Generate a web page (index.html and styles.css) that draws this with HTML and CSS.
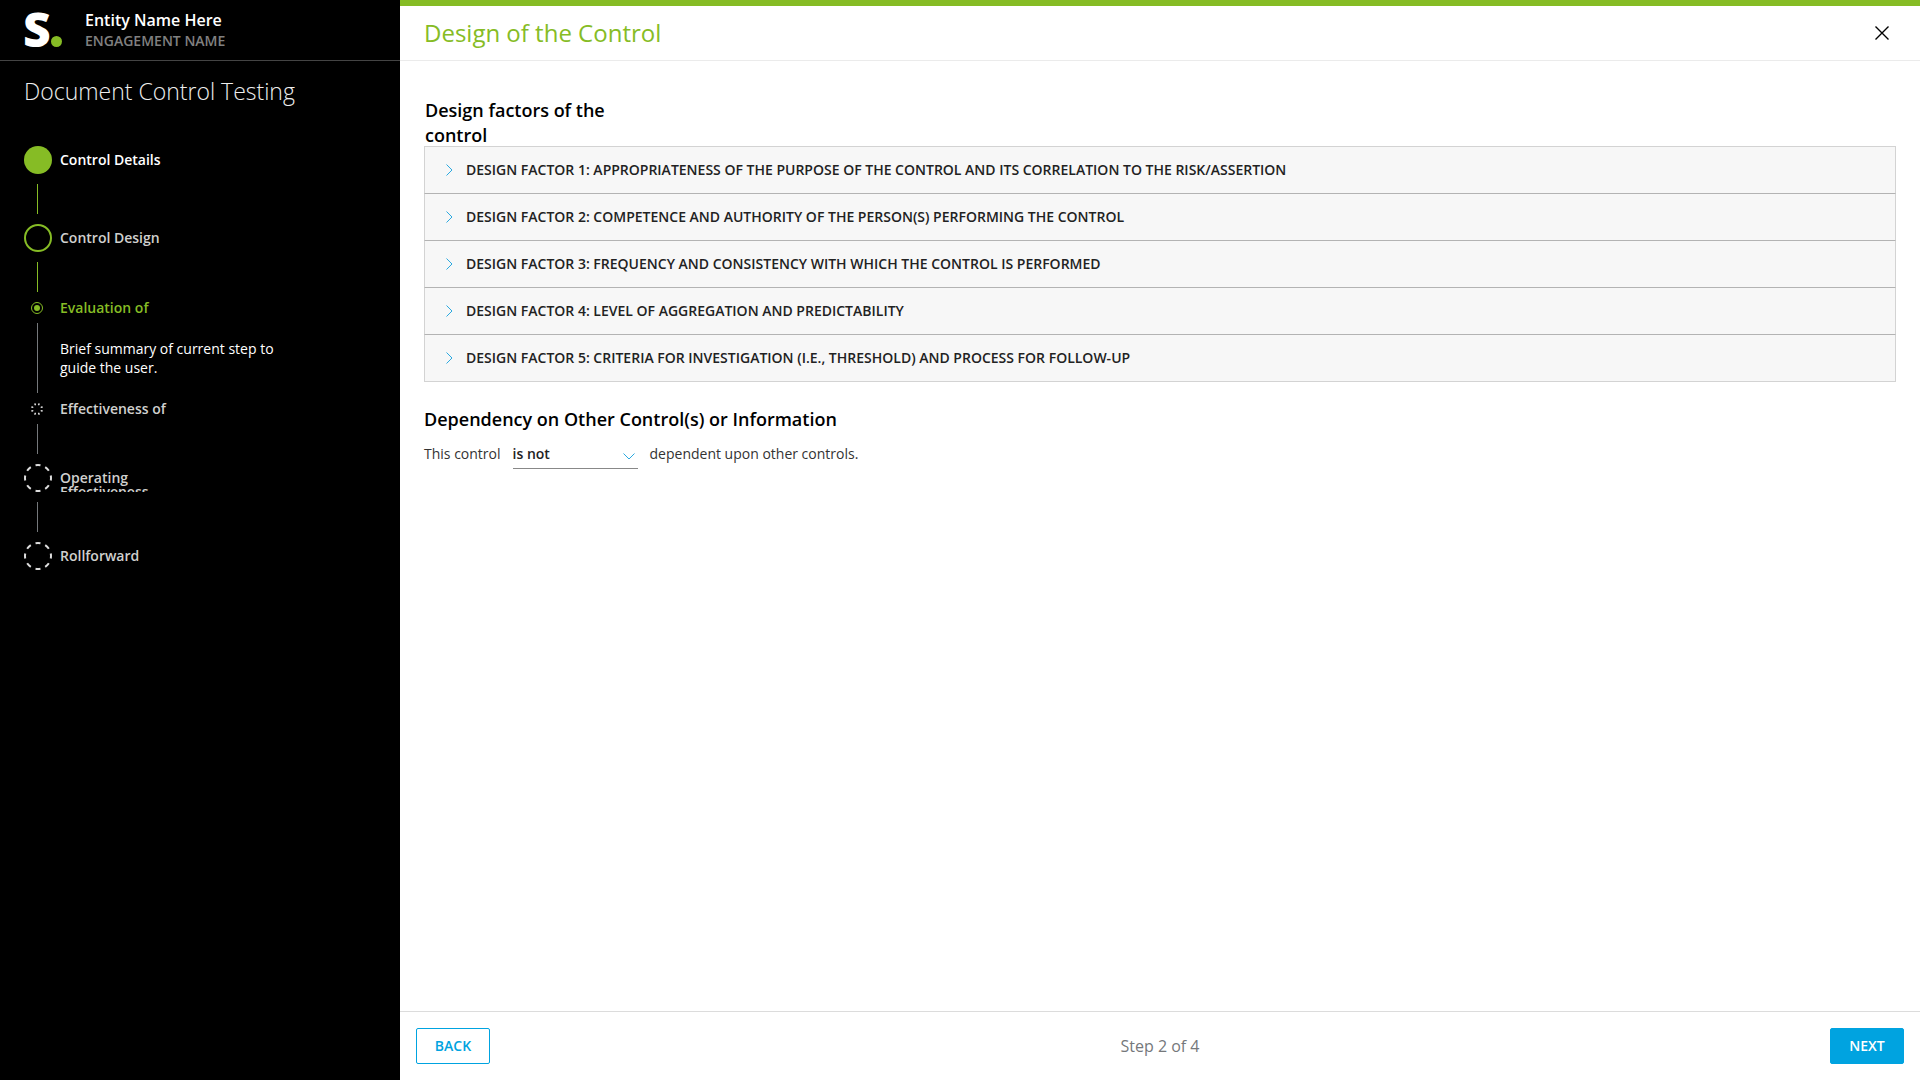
FILE: index.html
```html
<!DOCTYPE html>
<html lang="en">
<head>
  <meta charset="UTF-8" />
  <title>Document Control Testing</title>
  <meta name="viewport" content="width=device-width, initial-scale=1.0"/>
  <link rel="stylesheet" href="styles.css">
</head>
<body>

  <aside class="sidebar">
    <header class="brand">
      <div class="logo">S<span class="logo-dot"></span></div>
      <div class="entity">
        <div class="entity-name">Entity Name Here</div>
        <div class="engagement-name">ENGAGEMENT NAME</div>
      </div>
    </header>

    <h1 class="sidebar-title">Document Control Testing</h1>

    <ol class="steps">
      <li>
        <div class="step done">
          <svg class="marker" viewBox="0 0 28 28"><circle cx="14" cy="14" r="14" fill="#86bc25"/></svg>
          <span class="step-label">Control Details</span>
        </div>
        <div class="connector green"></div>
      </li>
      <li>
        <div class="step">
          <svg class="marker" viewBox="0 0 28 28"><circle cx="14" cy="14" r="13" fill="none" stroke="#86bc25" stroke-width="2"/></svg>
          <span class="step-label">Control Design</span>
        </div>
        <div class="connector green"></div>
      </li>
      <li>
        <div class="step substep current">
          <svg class="marker" viewBox="0 0 12 12"><circle cx="6" cy="6" r="5.5" fill="none" stroke="#86bc25"/><circle cx="6" cy="6" r="3" fill="#86bc25"/></svg>
          <span class="step-label">Evaluation of</span>
        </div>
        <div class="step-body">
          <div class="connector tall"></div>
          <p class="summary">Brief summary of current step to guide the user.</p>
        </div>
      </li>
      <li>
        <div class="step substep">
          <svg class="marker" viewBox="0 0 12 12"><circle cx="6" cy="6" r="5" fill="none" stroke="#ddd" stroke-width="2" pathLength="80" stroke-dasharray="4 6" stroke-dashoffset="-3"/></svg>
          <span class="step-label">Effectiveness of</span>
        </div>
        <div class="connector"></div>
      </li>
      <li>
        <div class="step">
          <svg class="marker" viewBox="0 0 28 28"><circle cx="14" cy="14" r="13" fill="none" stroke="#ddd" stroke-width="2" pathLength="80" stroke-dasharray="5 5" stroke-dashoffset="2.5"/></svg>
          <span class="step-label">Operating Effectiveness</span>
        </div>
        <div class="connector"></div>
      </li>
      <li>
        <div class="step">
          <svg class="marker" viewBox="0 0 28 28"><circle cx="14" cy="14" r="13" fill="none" stroke="#ddd" stroke-width="2" pathLength="80" stroke-dasharray="5 5" stroke-dashoffset="2.5"/></svg>
          <span class="step-label">Rollforward</span>
        </div>
      </li>
    </ol>
  </aside>

  <main class="main">
    <header class="page-header">
      <h2 class="page-title">Design of the Control</h2>
      <button class="close" aria-label="Close">
        <svg width="14" height="14" viewBox="0 0 14 14"><path d="M0.5 0.5L13.5 13.5M13.5 0.5L0.5 13.5" fill="none" stroke="#000" stroke-width="1.4"/></svg>
      </button>
    </header>

    <div class="content">
      <h3 class="section-title factors-title">Design factors of the control</h3>
      <div class="accordion">
        <button class="factor"><svg class="chevron" viewBox="0 0 7 12"><path d="M0.5 0.5L6 6L0.5 11.5"/></svg>DESIGN FACTOR 1: APPROPRIATENESS OF THE PURPOSE OF THE CONTROL AND ITS CORRELATION TO THE RISK/ASSERTION</button>
        <button class="factor"><svg class="chevron" viewBox="0 0 7 12"><path d="M0.5 0.5L6 6L0.5 11.5"/></svg>DESIGN FACTOR 2: COMPETENCE AND AUTHORITY OF THE PERSON(S) PERFORMING THE CONTROL</button>
        <button class="factor"><svg class="chevron" viewBox="0 0 7 12"><path d="M0.5 0.5L6 6L0.5 11.5"/></svg>DESIGN FACTOR 3: FREQUENCY AND CONSISTENCY WITH WHICH THE CONTROL IS PERFORMED</button>
        <button class="factor"><svg class="chevron" viewBox="0 0 7 12"><path d="M0.5 0.5L6 6L0.5 11.5"/></svg>DESIGN FACTOR 4: LEVEL OF AGGREGATION AND PREDICTABILITY</button>
        <button class="factor"><svg class="chevron" viewBox="0 0 7 12"><path d="M0.5 0.5L6 6L0.5 11.5"/></svg>DESIGN FACTOR 5: CRITERIA FOR INVESTIGATION (I.E., THRESHOLD) AND PROCESS FOR FOLLOW-UP</button>
      </div>

      <h3 class="section-title">Dependency on Other Control(s) or Information</h3>
      <div class="dependency">
        <label for="dependency">This control</label>
        <div class="select">
          <select id="dependency">
            <option>is</option>
            <option selected>is not</option>
          </select>
          <svg class="select-arrow" viewBox="0 0 12 7"><path d="M0.5 0.5L6 6L11.5 0.5"/></svg>
        </div>
        <span>dependent upon other controls.</span>
      </div>
    </div>

    <footer class="page-footer">
      <button class="btn">BACK</button>
      <span class="step-count">Step 2 of 4</span>
      <button class="btn primary">NEXT</button>
    </footer>
  </main>

</body>
</html>
```
FILE: styles.css
```css
* {
  box-sizing: border-box;
}

body {
  margin: 0;
  display: flex;
  min-height: 100vh;
  font-family: "Open Sans", sans-serif;
  font-size: 14px;
  color: #333;
  background: #fff;
}

h1, h2, h3, p, ol {
  margin: 0;
  padding: 0;
}

button, select {
  font-family: inherit;
  font-size: 14px;
  cursor: pointer;
}

/* sidebar */
.sidebar {
  flex: 0 0 400px;
  background: #000;
  color: #d0d0ce;
}

.brand {
  display: flex;
  align-items: center;
  height: 61px;
  padding: 0 24px 0 23px;
  border-bottom: 1px solid #444;
}

.logo {
  display: flex;
  align-items: baseline;
  width: 62px;
  padding-bottom: 2px;
  color: #fff;
  font-size: 48px;
  font-weight: 800;
  line-height: 56px;
}

.logo-dot {
  width: 11px;
  height: 11px;
  border-radius: 50%;
  background: #86bc25;
}

.entity-name {
  color: #fff;
  font-size: 16px;
  font-weight: 600;
  line-height: 22px;
}

.engagement-name {
  color: #808080;
  font-weight: 600;
  line-height: 20px;
}

.sidebar-title {
  padding: 14px 24px 0;
  color: #eee;
  font-size: 23px;
  font-weight: 300;
  line-height: 32px;
}

.steps {
  padding: 39px 24px;
  list-style: none;
}

.step {
  display: flex;
  align-items: center;
  gap: 8px;
  height: 28px;
}

.marker {
  flex: none;
  width: 28px;
  height: 28px;
}

.step-label {
  width: 120px;
  max-height: 28px;
  padding: 7px 0;
  overflow: hidden;
  font-weight: 600;
  line-height: 14px;
}

.done .step-label {
  color: #fff;
}

.substep {
  height: 12px;
}

.substep .marker {
  width: 12px;
  height: 12px;
  margin: 0 9px 0 7px;
}

.current {
  color: #86bc25;
}

.connector {
  width: 1px;
  height: 30px;
  margin: 10px 13px;
  background: #75787b;
}

.substep ~ .connector,
.step-body .connector {
  margin-top: 9px;
}

.green {
  background: #86bc25;
}

.tall {
  height: 70px;
}

.step-body {
  display: flex;
  align-items: center;
}

.summary {
  width: 240px;
  padding: 0 0 2px 9px;
  color: #fff;
  line-height: 19px;
}

/* main */
.main {
  flex: 1;
  display: flex;
  flex-direction: column;
  min-width: 0;
  border-top: 6px solid #86bc25;
}

.page-header {
  display: flex;
  align-items: center;
  justify-content: space-between;
  height: 55px;
  padding: 0 24px;
  border-bottom: 1px solid #ebebeb;
}

.page-title {
  color: #86bc25;
  font-size: 24px;
  font-weight: 400;
  line-height: 32px;
}

.close {
  display: flex;
  padding: 7px;
  border: 0;
  background: none;
}

.content {
  flex: 1;
  padding: 37px 24px 24px;
}

.section-title {
  color: #000;
  font-size: 18px;
  font-weight: 600;
  line-height: 25px;
}

.factors-title {
  width: 200px;
  margin-bottom: -2px;
  padding-left: 1px;
}

.accordion {
  margin-bottom: 25px;
  border-top: 1px solid #d3d3d3;
}

.factor {
  display: flex;
  align-items: center;
  gap: 13px;
  width: 100%;
  height: 47px;
  padding: 0 21px;
  border: 1px solid #d3d3d3;
  border-width: 0 1px 1px;
  border-bottom-color: #b3b3b3;
  background: #f7f7f7;
  color: #222;
  font-weight: 600;
  line-height: 18px;
  text-align: left;
}

.factor:last-child {
  border-bottom-color: #d3d3d3;
}

.chevron {
  flex: none;
  width: 7px;
  height: 12px;
}

.chevron path,
.select-arrow path {
  fill: none;
  stroke: #2ba9e0;
}

.dependency {
  display: flex;
  align-items: baseline;
  gap: 12px;
  margin-top: 7px;
}

.select {
  position: relative;
  width: 125px;
}

.select select {
  display: block;
  width: 100%;
  height: 30px;
  padding: 0;
  appearance: none;
  border: 0;
  border-bottom: 1px solid #888;
  border-radius: 0;
  background: none;
  color: #222;
  font-weight: 600;
}

.select-arrow {
  position: absolute;
  right: 3px;
  top: 14px;
  width: 12px;
  height: 7px;
  pointer-events: none;
}

/* footer */
.page-footer {
  display: flex;
  align-items: center;
  justify-content: space-between;
  height: 69px;
  padding: 0 16px;
  border-top: 1px solid #dcdcdc;
}

.btn {
  width: 74px;
  height: 36px;
  padding: 0 0 2px;
  border: 1px solid #00a3e0;
  border-radius: 2px;
  background: #fff;
  color: #00a3e0;
  font-weight: 600;
}

.primary {
  background: #00a3e0;
  color: #fff;
}

.step-count {
  color: #75787b;
  font-size: 16px;
}
```
